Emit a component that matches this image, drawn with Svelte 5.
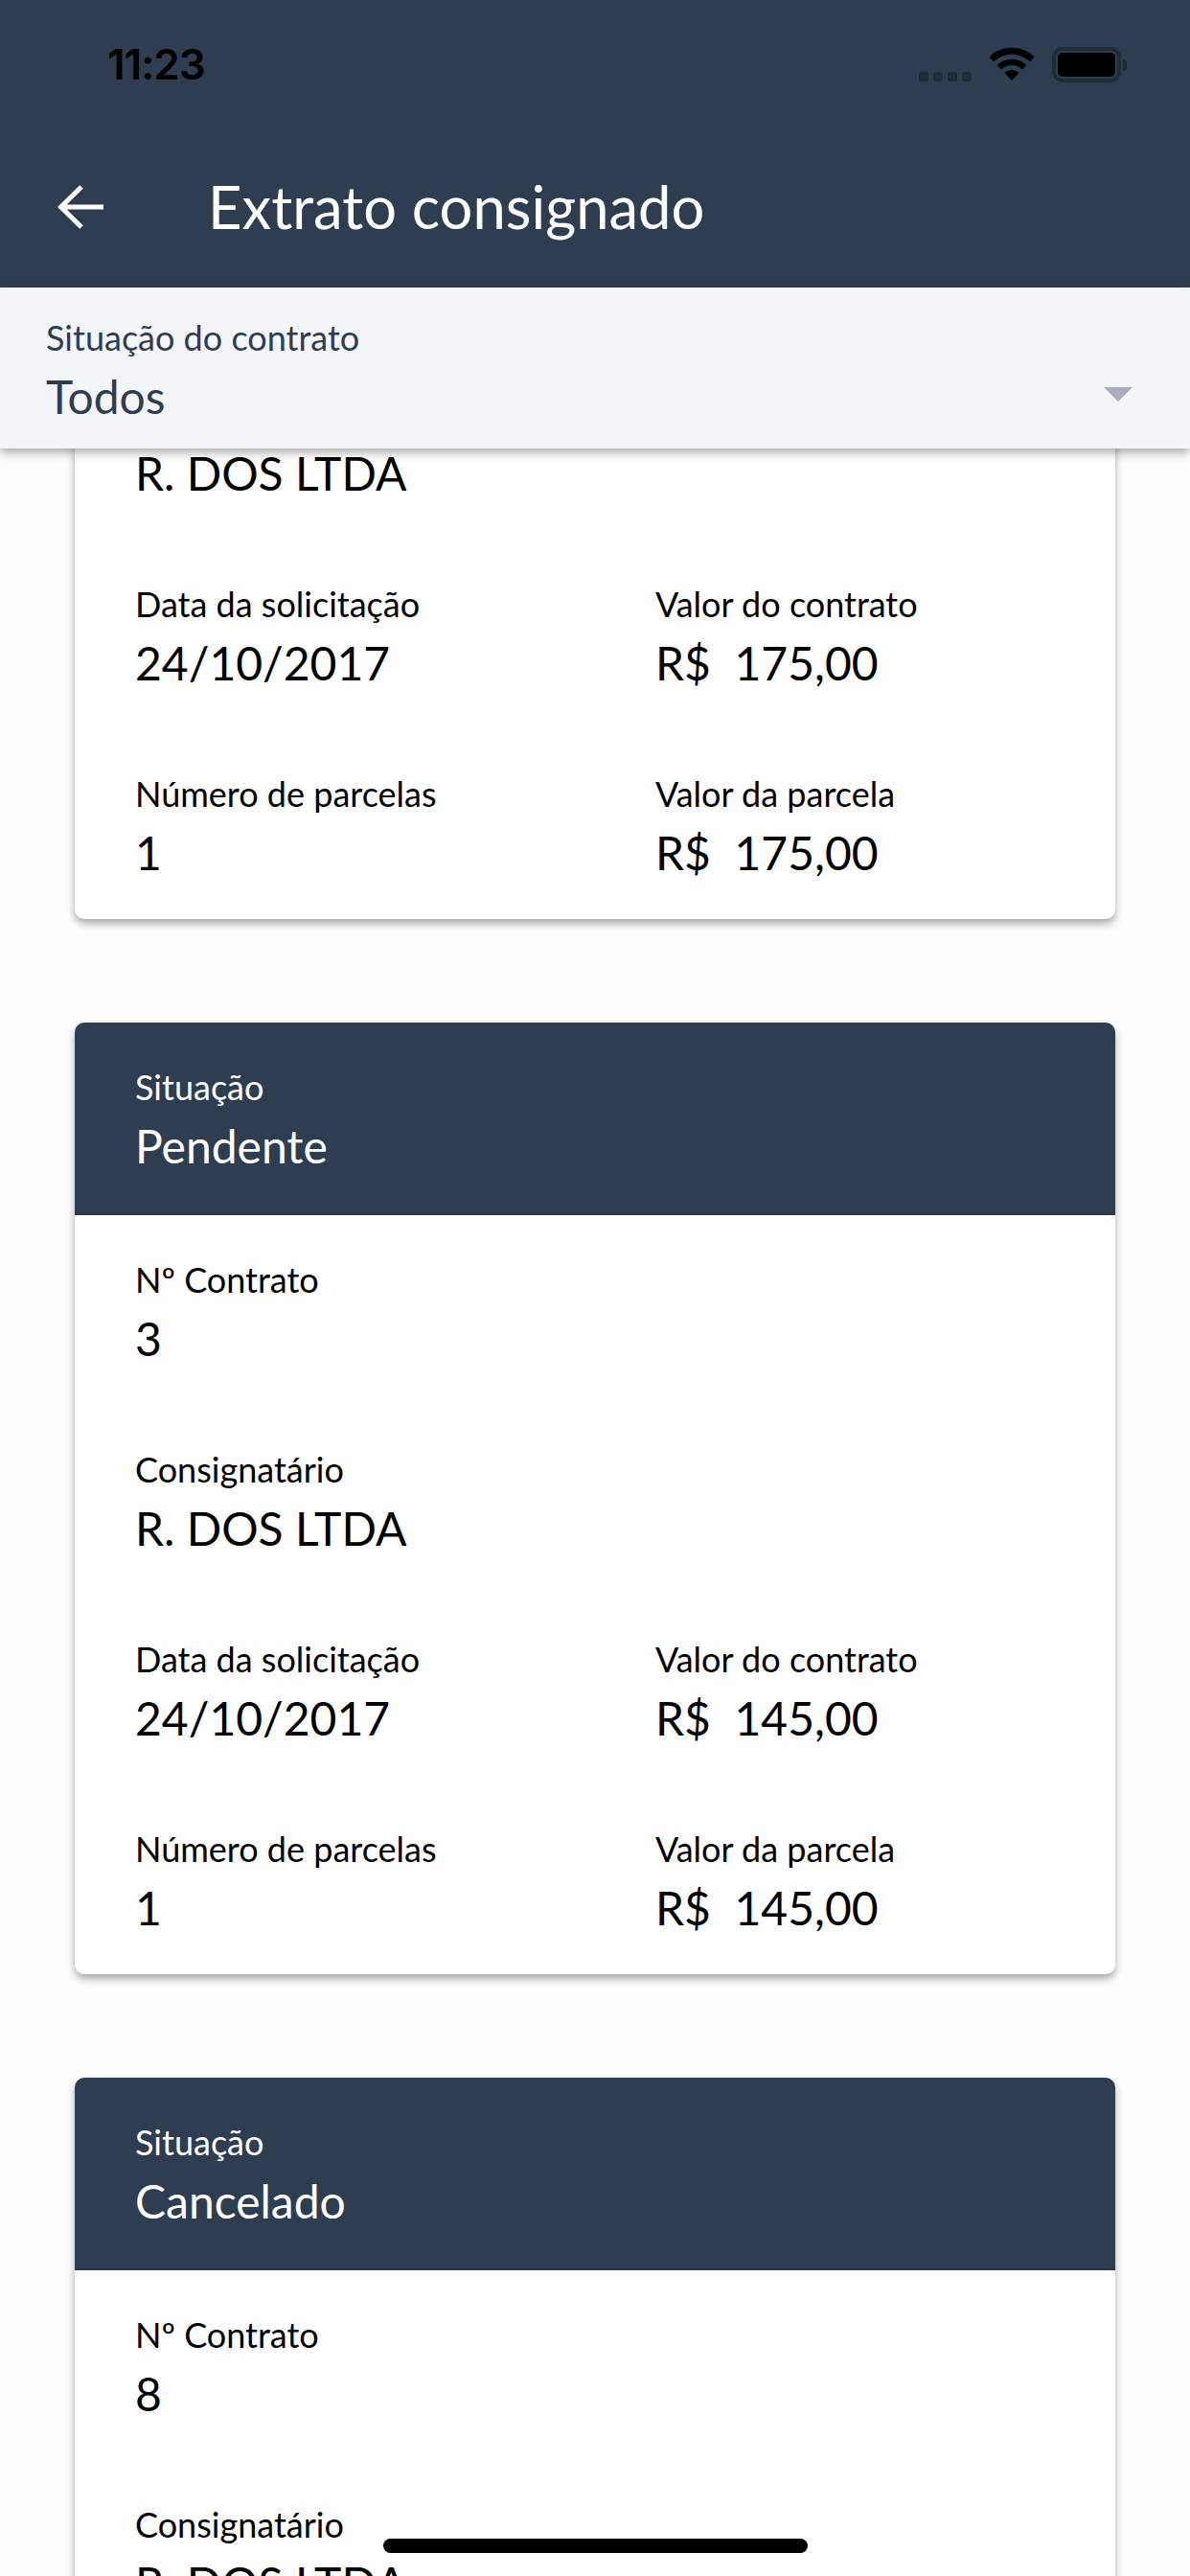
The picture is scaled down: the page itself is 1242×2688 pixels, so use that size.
<script>
  const cards = [
    { status: "Concluído", contract: "2", holder: "R. DOS LTDA", date: "24/10/2017", total: "175,00", parcels: "1", parcel: "175,00" },
    { status: "Pendente", contract: "3", holder: "R. DOS LTDA", date: "24/10/2017", total: "145,00", parcels: "1", parcel: "145,00" },
    { status: "Cancelado", contract: "8", holder: "R. DOS LTDA", date: "24/10/2017", total: "145,00", parcels: "1", parcel: "145,00" },
  ];
</script>

<div class="screen">
  <header class="appbar">
    <div class="statusbar">
      <span class="time">11:23</span>
      <div class="status-icons">
        <div class="signal"><i></i><i></i><i></i><i></i></div>
        <svg class="wifi" width="48" height="36" viewBox="0 0 48 36">
          <path d="M0.500 10.500 C13 -2.500 35 -2.500 47.500 10.500 L43 15.500 C32.500 5 15.500 5 5 15.500 Z" fill="#000" />
          <path d="M8.500 19 C17 10.500 31 10.500 39.500 19 L35 23.500 C28.500 17.500 19.500 17.500 13 23.500 Z" fill="#000" />
          <path d="M16.500 27 C21 23 27 23 31.500 27 L24 35 Z" fill="#000" />
        </svg>
        <div class="battery"><span class="level"></span><span class="cap"></span></div>
      </div>
    </div>
    <div class="toolbar">
      <svg class="back" width="48" height="48" viewBox="0 0 48 48">
        <path d="M48 24 H6 M25 3 L3.500 24 L25 45" fill="none" stroke="#fff" stroke-width="5" />
      </svg>
      <h1>Extrato consignado</h1>
    </div>
  </header>

  <div class="filter">
    <div>
      <div class="filter-label">Situação do contrato</div>
      <div class="filter-value">Todos</div>
    </div>
    <span class="caret"></span>
  </div>

  <main class="list">
    <div class="scroller">
      {#each cards as card}
        <section class="card">
          <div class="card-head">
            <div class="head-label">Situação</div>
            <div class="head-value">{card.status}</div>
          </div>
          <div class="card-body">
            <div class="field wide">
              <div class="label">Nº Contrato</div>
              <div class="value">{card.contract}</div>
            </div>
            <div class="field wide">
              <div class="label">Consignatário</div>
              <div class="value">{card.holder}</div>
            </div>
            <div class="field">
              <div class="label">Data da solicitação</div>
              <div class="value">{card.date}</div>
            </div>
            <div class="field">
              <div class="label">Valor do contrato</div>
              <div class="value">R$&nbsp; {card.total}</div>
            </div>
            <div class="field">
              <div class="label">Número de parcelas</div>
              <div class="value">{card.parcels}</div>
            </div>
            <div class="field">
              <div class="label">Valor da parcela</div>
              <div class="value">R$&nbsp; {card.parcel}</div>
            </div>
          </div>
        </section>
      {/each}
    </div>
  </main>

  <div class="home"></div>
</div>

<style>
  :global(body) {
    background: #fdfdfd;
  }

  .screen {
    position: relative;
    width: 1242px;
    height: 2688px;
    overflow: hidden;
    display: flex;
    flex-direction: column;
    background: #fdfdfd;
    font-family: Lato, "Liberation Sans", sans-serif;
  }

  .appbar {
    height: 300px;
    flex: none;
    background: #2e3e50;
    display: flex;
    flex-direction: column;
  }

  .statusbar {
    height: 160px;
    flex: none;
    display: flex;
    justify-content: space-between;
    padding: 40px 72px 0 112px;
    box-sizing: border-box;
  }

  .time {
    font-family: Inter, "Liberation Sans", sans-serif;
    font-size: 44px;
    font-weight: 600;
    line-height: 54px;
    color: #000;
    letter-spacing: -1px;
  }

  .status-icons {
    display: flex;
    align-items: flex-start;
    gap: 18px;
    padding-top: 9px;
  }

  .signal {
    display: flex;
    gap: 5px;
    padding-top: 26px;
  }

  .signal i {
    width: 10px;
    height: 10px;
    border-radius: 3px;
    background: #1f2c3a;
  }

  .battery {
    position: relative;
    width: 72px;
    height: 37px;
    box-sizing: border-box;
    border: 4px solid #1f2c3a;
    border-radius: 11px;
    padding: 2px;
    display: flex;
  }

  .level {
    flex: 1;
    background: #000;
    border-radius: 5px;
  }

  .cap {
    position: absolute;
    right: -10px;
    top: 9px;
    width: 4px;
    height: 12px;
    background: #1f2c3a;
    border-radius: 0 4px 4px 0;
  }

  .toolbar {
    display: flex;
    align-items: center;
    padding-left: 60px;
    height: 112px;
    gap: 109px;
  }

  .back {
    flex: none;
  }

  h1 {
    margin: 0;
    font-size: 61.500px;
    font-weight: 400;
    color: #fff;
    line-height: 1;
  }

  .filter {
    position: relative;
    z-index: 2;
    height: 168px;
    flex: none;
    box-sizing: border-box;
    padding: 30px 48px 0;
    background: #f3f5f9;
    box-shadow: 0 4px 10px rgba(0, 0, 0, 0.35);
    display: flex;
    justify-content: space-between;
    color: #2e3e50;
  }

  .filter-label {
    font-size: 36px;
    line-height: 44px;
  }

  .filter-value {
    margin-top: 10px;
    font-size: 48px;
    line-height: 60px;
  }

  .caret {
    align-self: flex-start;
    margin-top: 74px;
    margin-right: 12px;
    width: 0;
    height: 0;
    border-left: 15px solid transparent;
    border-right: 15px solid transparent;
    border-top: 15px solid #a9afb8;
  }

  .list {
    flex: 1;
    overflow: hidden;
  }

  .scroller {
    margin-top: -502px;
    padding: 0 78px;
    display: flex;
    flex-direction: column;
    gap: 108px;
  }

  .card {
    background: #fff;
    border-radius: 10px;
    box-shadow: 0 5px 8px rgba(0, 0, 0, 0.33);
  }

  .card-head {
    height: 201px;
    box-sizing: border-box;
    padding: 45px 63px 0;
    background: #2e3e50;
    border-bottom: 2px solid #2a3948;
    border-radius: 10px 10px 0 0;
    color: #fff;
  }

  .head-label {
    font-size: 36px;
    line-height: 44px;
  }

  .head-value {
    margin-top: 10px;
    font-size: 48px;
    line-height: 60px;
  }

  .card-body {
    display: grid;
    grid-template-columns: 543px 1fr;
    padding: 45px 63px 0;
    height: 792px;
    box-sizing: border-box;
    grid-auto-rows: 198px;
    color: #000;
  }

  .wide {
    grid-column: 1 / -1;
  }

  .label {
    font-size: 36px;
    line-height: 44px;
  }

  .value {
    margin-top: 10px;
    font-size: 48px;
    line-height: 60px;
  }

  .home {
    position: absolute;
    left: 400px;
    top: 2649px;
    width: 443px;
    height: 15px;
    border-radius: 8px;
    background: #000;
  }
</style>
